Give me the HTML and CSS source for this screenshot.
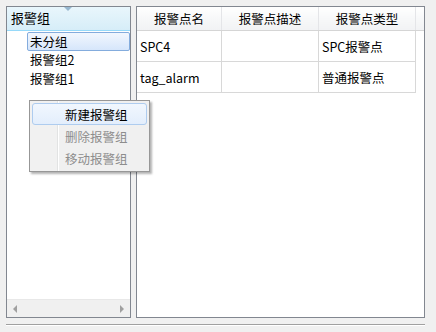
FILE: index.html
```html
<!DOCTYPE html>
<html lang="zh-CN">
<head>
    <meta charset="UTF-8">
    <title>报警组</title>
    <link rel="stylesheet" href="styles.css">
</head>
<body>
    <div class="main">
        <div class="panel tree-panel">
            <div class="tree-head">
                <span class="sort-arrow"></span>
                报警组
            </div>
            <ul class="tree">
                <li class="selected">未分组</li>
                <li>报警组2</li>
                <li>报警组1</li>
            </ul>
            <div class="hscroll">
                <span class="arr arr-left"></span>
                <span class="arr arr-right"></span>
            </div>
        </div>
        <div class="panel table-panel">
            <table class="grid">
                <thead>
                    <tr>
                        <th class="c1">报警点名</th>
                        <th class="c2">报警点描述</th>
                        <th class="c3">报警点类型</th>
                        <th class="cx"></th>
                    </tr>
                </thead>
                <tbody>
                    <tr>
                        <td>SPC4</td>
                        <td></td>
                        <td>SPC报警点</td>
                        <td class="empty"></td>
                    </tr>
                    <tr>
                        <td>tag_alarm</td>
                        <td></td>
                        <td>普通报警点</td>
                        <td class="empty"></td>
                    </tr>
                </tbody>
            </table>
        </div>
    </div>
    <div class="bottom-line"></div>

    <div class="menu">
        <div class="item active">新建报警组</div>
        <div class="item disabled">删除报警组</div>
        <div class="item disabled">移动报警组</div>
    </div>
</body>
</html>
```

FILE: styles.css
```css
body {
    margin: 0;
    padding: 6px 0 0 6px;
    background: #f0f0f0;
    font-family: "Noto Sans CJK SC", "Liberation Sans", sans-serif;
    font-size: 12px;
    color: #000;
}
.main {
    display: flex;
    gap: 5px;
    height: 312px;
}
.panel {
    box-sizing: border-box;
    border: 1px solid #828790;
    background: #fff;
    display: flex;
    flex-direction: column;
}
.tree-panel {
    width: 125px;
}
.table-panel {
    width: 289px;
}
.tree-head {
    position: relative;
    height: 23px;
    line-height: 22px;
    padding-left: 4px;
    font-size: 13px;
    background: linear-gradient(#e9f6fc, #d6edf8);
    border-bottom: 1px solid #96d9f9;
}
.sort-arrow {
    position: absolute;
    left: 57px;
    top: 0;
    width: 0;
    height: 0;
    border-left: 4px solid transparent;
    border-right: 4px solid transparent;
    border-top: 4px solid #97b7d0;
}
.tree {
    list-style: none;
    margin: 1px 0 0 0;
    padding: 0;
    flex: 1;
}
.tree li {
    height: 19px;
    line-height: 18px;
    margin-left: 20px;
    padding-left: 3px;
    font-size: 12.5px;
}
.tree li.selected {
    box-sizing: border-box;
    border: 1px solid #84acdd;
    border-radius: 2px;
    padding-left: 2px;
    background: linear-gradient(#f2f7fe, #d6e6fb);
}
.hscroll {
    height: 17px;
    background: #f0f0f0;
    border-top: 1px solid #e8e8e8;
    position: relative;
}
.arr {
    position: absolute;
    top: 5px;
    width: 0;
    height: 0;
    border-top: 4px solid transparent;
    border-bottom: 4px solid transparent;
}
.arr-left {
    left: 6px;
    border-right: 4px solid #a0a0a0;
}
.arr-right {
    right: 6px;
    border-left: 4px solid #a0a0a0;
}
.grid {
    border-collapse: collapse;
    table-layout: fixed;
    width: 287px;
}
.grid th {
    height: 23px;
    padding: 0;
    font-weight: normal;
    font-size: 12.5px;
    background: linear-gradient(#ffffff 0%, #f7f8f9 50%, #f1f2f4 100%);
    border-right: 1px solid #e4e5e8;
    border-bottom: 1px solid #d5d5d5;
}
.grid .c1 { width: 84px; }
.grid .c2 { width: 96px; }
.grid .c3 { width: 96px; }
.grid .cx { border-right: none; }
.grid td {
    height: 30px;
    padding: 0 0 0 3px;
    font-size: 12.5px;
    border: 1px solid #d8d8d8;
    border-top: none;
    border-left: none;
}
.grid td.empty {
    border: none;
}
.bottom-line {
    width: 419px;
    height: 0;
    margin-top: 6px;
    border-top: 1px solid #a0a0a0;
    border-bottom: 1px solid #fff;
}
.menu {
    position: absolute;
    left: 29px;
    top: 100px;
    width: 121px;
    box-sizing: border-box;
    padding: 2px;
    border: 1px solid #979797;
    background: linear-gradient(to right, #f1f1f1 27px, #e2e3e3 27px, #e2e3e3 28px, #fff 28px, #fff 29px, #f0f0f0 29px);
    box-shadow: 2px 2px 2px rgba(0, 0, 0, 0.3);
}
.menu .item {
    height: 22px;
    line-height: 22px;
    padding-left: 32px;
    font-size: 12.5px;
    box-sizing: border-box;
    border: 1px solid transparent;
}
.menu .item.active {
    border-color: #aeccef;
    border-radius: 3px;
    background: linear-gradient(#f1f7fe, #e3eefc);
}
.menu .item.disabled {
    color: #8d8d8d;
}
```
